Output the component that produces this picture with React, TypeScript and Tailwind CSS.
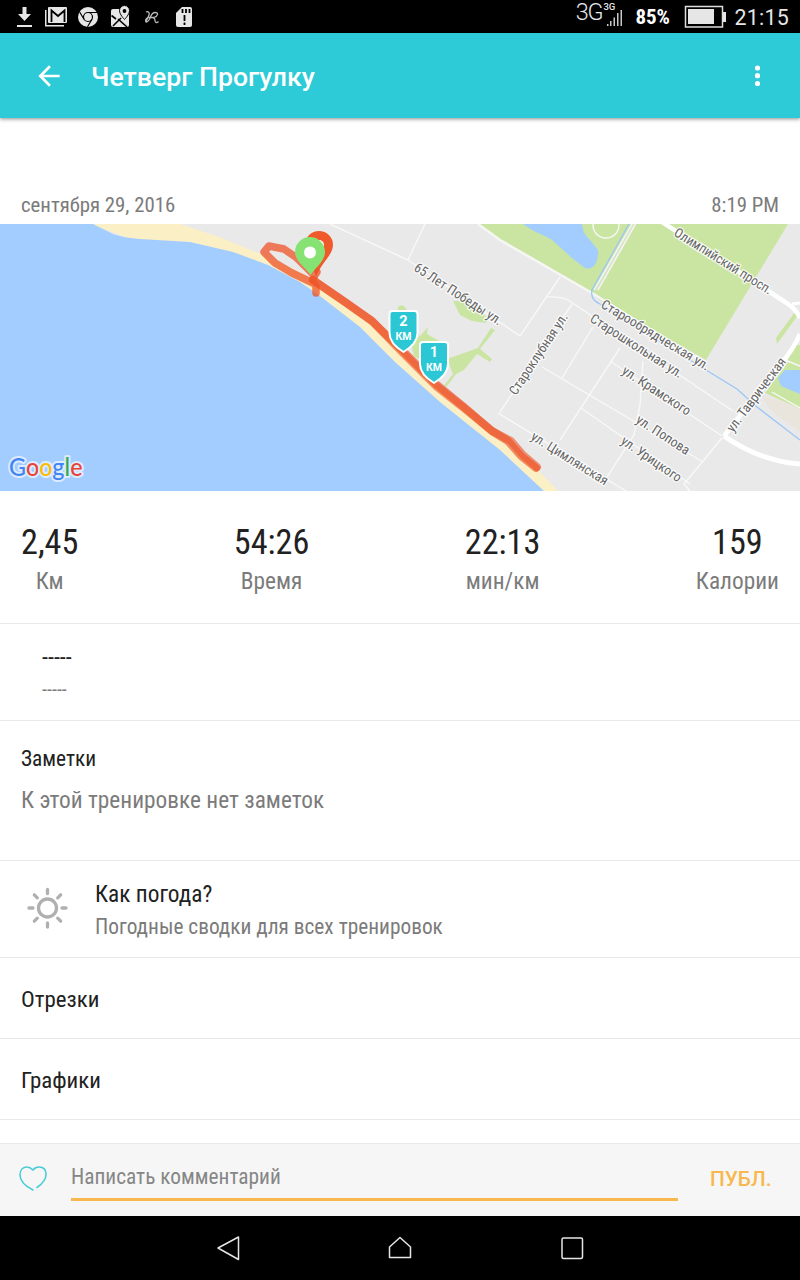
import type { ReactNode } from 'react';

const stats = [
  { value: '2,45', label: 'Км' },
  { value: '54:26', label: 'Время' },
  { value: '22:13', label: 'мин/км' },
  { value: '159', label: 'Калории' },
];

const streets = [
  { name: '65 Лет Победы ул.', x: 413, y: 270, angle: 33, length: 102 },
  { name: 'Староклубная ул.', x: 516, y: 396, angle: -56.500, length: 95 },
  { name: 'Олимпийский просп.', x: 673, y: 235, angle: 32, length: 113 },
  { name: 'Старообрядческая ул.', x: 600, y: 307, angle: 31, length: 124 },
  { name: 'Старошкольная ул.', x: 589, y: 321, angle: 32.500, length: 107 },
  { name: 'ул. Крамского', x: 621, y: 373, angle: 33, length: 79 },
  { name: 'ул. Попова', x: 635, y: 422, angle: 33, length: 61 },
  { name: 'ул. Урицкого', x: 620, y: 443, angle: 34.500, length: 70 },
  { name: 'ул. Цимлянская', x: 530, y: 439, angle: 32, length: 88 },
  { name: 'ул. Таврическая', x: 733, y: 433, angle: -53, length: 89 },
];

function StatusBar() {
  return (
    <div className="flex h-[33px] items-center justify-between bg-black pl-4 pr-[11px] text-[#e6e6e6] [font-stretch:100%]">
      <svg width="180" height="33" viewBox="16 0 180 33" fill="#e6e6e6">
        <path d="M22.500 7h4v7h4.500l-6.500 7-6.500-7h4.500zM17 25h15v2H17z" />
        <path d="M45 10h1.500v15H64v1.500H45z" />
        <path d="M49 7h17a1 1 0 0 1 1 1v14a1 1 0 0 1-1 1H49a1 1 0 0 1-1-1V8a1 1 0 0 1 1-1z" />
        <path d="M51.500 22V10.500l6.500 5.500 6.500-5.500v11.500" fill="none" stroke="#000" strokeWidth="1.800" />
        <circle cx="88" cy="17" r="10" />
        <g fill="none" stroke="#000" strokeWidth="1.200">
          <circle cx="88" cy="17" r="4.500" />
          <path d="M88 12.500h9M84 19.200l-4.500-7.500M92 19.200l-4.500 7.600" />
        </g>
        <path d="M113 9h14a2 2 0 0 1 2 2v14a2 2 0 0 1-2 2h-14a2 2 0 0 1-2-2V11a2 2 0 0 1 2-2z" />
        <path d="M111.500 15.500L116 19M118 19l9 8M113 26l8-8" fill="none" stroke="#000" strokeWidth="1.600" />
        <path d="M124.500 5.500a5 5 0 0 1 5 5c0 4-5 9-5 9s-5-5-5-9a5 5 0 0 1 5-5z" stroke="#000" />
        <circle cx="124.500" cy="11" r="1.900" fill="#000" />
        <path
          d="M146 12C148 11 150 12.500 149 15S147 20 146 21S147 23 149 20S151 12.500 155 12.500S158 16 154 17.500H150C153 17 155 18 155 20.500S157 23 158.500 21.500M150 17.500C147.500 17 145.500 19 145.500 21"
          fill="none"
          stroke="#bbb"
          strokeWidth="1.300"
        />
        <path d="M182 7h8a2 2 0 0 1 2 2v16a2 2 0 0 1-2 2h-12a2 2 0 0 1-2-2V13z" />
        <path d="M182.500 9v4M186 9v4M189.500 9v4M184.500 15v6M184.500 22.500v2.500" stroke="#000" strokeWidth="1.800" />
      </svg>
      <div className="flex items-center font-['Roboto']">
        <span className="pb-[8px] text-[23.500px] leading-none font-light tracking-[-1.2px]">3G</span>
        <div className="flex h-[25px] w-[21px] flex-col items-end">
          <span className="-mt-[2px] w-full pl-px text-[9.500px] leading-[10px] font-medium">3G</span>
          <svg className="-mt-[3px]" width="17" height="17" viewBox="0 0 17 17" fill="#c9c9c9">
            <path d="M1 15h1.500v2H1zM4 12h1.500v5H4zM7.500 8.500H9V17H7.500zM11 4h1.500v13H11zM14.500 1H16v16h-1.500z" />
          </svg>
        </div>
        <span className="ml-[12px] w-9 pt-[3px] text-[21px] font-bold text-white [font-stretch:75%]">85%</span>
        <svg className="ml-[13px]" width="43" height="24" viewBox="0 0 43 24">
          <rect x="1.500" y="1.500" width="37" height="20.500" fill="none" stroke="#ddd" strokeWidth="1.500" />
          <path d="M4 4h26v15H4zM39 7h3v10h-3z" fill="#e6e6e6" />
        </svg>
        <span className="ml-[7px] pt-[3px] text-[21.330px] tracking-[0.3px]">21:15</span>
      </div>
    </div>
  );
}

function AppBar() {
  return (
    <header className="relative flex h-[85px] items-center bg-[#2dcad7] pl-[33px] pr-8 text-white shadow-[0_1px_4px_rgba(0,0,0,0.45)] [font-stretch:100%]">
      <svg className="shrink-0" width="32" height="32" viewBox="0 0 24 24" fill="white">
        <path d="M20 11H7.830l5.590-5.590L12 4l-8 8 8 8 1.410-1.410L7.830 13H20v-2z" />
      </svg>
      <h1 className="ml-[26px] pt-0.5 font-['Roboto'] text-[26.670px] font-medium">Четверг Прогулку</h1>
      <svg className="-mr-[6px] ml-auto" width="32" height="32" viewBox="0 0 32 32" fill="white">
        <circle cx="15.500" cy="8" r="2.600" />
        <circle cx="15.500" cy="15.700" r="2.600" />
        <circle cx="15.500" cy="23.500" r="2.600" />
      </svg>
    </header>
  );
}

function KmMarker({ x, y, km }: { x: number; y: number; km: string }) {
  return (
    <g transform={`translate(${x} ${y})`}>
      <path
        d="M-11 -41H11a3 3 0 0 1 3 3V-19C14 -10 5 -3 0 0C-5 -3 -14 -10 -14 -19V-38a3 3 0 0 1 3-3z"
        fill="#2bc7d4"
        stroke="white"
        strokeWidth="2"
      />
      <g fill="white" textAnchor="middle" className="font-['Roboto'] font-bold [font-stretch:100%]">
        <text y="-26" fontSize="14.500">{km}</text>
        <text y="-12" fontSize="10.500">КМ</text>
      </g>
    </g>
  );
}

function RouteMap() {
  return (
    <svg className="block" width="800" height="267" viewBox="0 224 800 267">
      <rect y="224" width="800" height="267" fill="#e9e9e9" />

      {/* parks */}
      <g fill="#cae5a2">
        <path d="M478 224H788L706 360L600 300L592 294L500 240z" />
        <path d="M776 338L795 312L798 315L777 344z" />
        <path d="M795 345H800V409L765 393L785 366z" />
        <path d="M443 387L453 374L447 359L478 348L491 328L495 330L480 349L492 359L490 362L477 354L464 370L456 374L447 386z" />
        <path d="M398 307l4-2 4 3v6h-8zM410 340L420 336 428 327 427 334 444 344 440 372 414 356z" />
        <path d="M453 301h14l12 9 9 9-2 4-14-2-12-6z" />
      </g>
      <path d="M760 394L785 402L800 409V432L770 410z" fill="#e9e5dc" />

      {/* inland water */}
      <g fill="#a3ccff">
        <path d="M523 224L532 230C541 235 547 236 552 240L560 247L572 258L585 268C593 271 599 262 598 250L590 240C584 235 583 230 582 224z" />
        <path d="M778 378L785 370H800V394L781 386z" />
      </g>

      {/* minor streets */}
      <g fill="none" stroke="#f8f8f8" strokeWidth="1.400">
        <path d="M330 224L408 260L520 336L560 277M408 260L425 224" />
        <path d="M548 297Q565 296 574 304L733 411M572 304L500 412M542 367L703 462" />
        <path d="M593 327L562 378M620 348L560 440M581 408L690 484M610 361L722 436M643 361L640 405L634 435L607 477" />
        <path d="M498 413L626 491M722 438L684 484L690 491" />
        <circle cx="606" cy="225" r="13" />
        <path d="M785 360L800 366M772 392L800 408" />
      </g>

      {/* main roads */}
      <g fill="none" stroke="white">
        <path d="M478 224L500 240L592 293L706 364" strokeWidth="2.500" stroke="#f6f6f6" />
        <path d="M634 224L596 290" stroke="#d9e5c6" strokeWidth="5" />
        <path d="M635.500 224L598 290M632 224L594 290" stroke="#f6f6f6" strokeWidth="1.300" />
        <path d="M662 222L782 300Q796 308 800 318" strokeWidth="4.500" />
        <path d="M800 334Q794 348 784 360L724 436" strokeWidth="4.500" />
        <path d="M724 436Q760 461 800 464" strokeWidth="5" />
        <path d="M792 304L800 303" strokeWidth="3" />
      </g>

      {/* canal */}
      <path
        d="M629 224L592 290Q590 300 600 304L706 370L737 389L757 407L800 440"
        fill="none"
        stroke="#9cc6f7"
        strokeWidth="1.300"
      />

      {/* beach and sea */}
      <path d="M90 224H180L222 238L270 258L300 272L345 303L375 323L400 350L440 388L480 423L530 462L558 491H540L300 300z" fill="#fbefc6" />
      <path
        d="M0 224H93Q103 229 113 234Q124 238 140 239L190 242L233 252L268 265L300 282L320 296L360 327L395 362L440 402L500 450L544 491H0z"
        fill="#a3ccff"
      />

      {/* finish pin, route, start pin */}
      <path d="M319 231a14 14 0 0 1 14 14c0 10-12 18-17 32c-3-12-11-22-11-32a14 14 0 0 1 14-14z" fill="#f05a2b" />
      <circle cx="319" cy="245" r="5" fill="white" />
      <g fill="none" stroke="#ee5327" strokeLinecap="round" strokeLinejoin="round">
        <path
          d="M313 283L292 273L275 263L264 252L269 246L284 249L297 258L313 274L317 272L312 280L316 286V293"
          strokeWidth="7.500"
          strokeOpacity="0.75"
        />
        <path d="M313 280L345 302L372 321L403 351L436 384L464 407L492 431L508 441L521 456L536 468" strokeWidth="8" strokeOpacity="0.65" />
        <path d="M313 280L345 302L372 321L403 353L436 386L464 408L492 431L511 441L523 455L537 467" strokeWidth="8" strokeOpacity="0.6" />
      </g>
      <path d="M310 237a15 15 0 0 1 15 15c0 9-9 15-14.500 23c-5.500-8-15.500-14-15.500-23a15 15 0 0 1 15-15z" fill="#86e373" />
      <circle cx="310" cy="252.500" r="6" fill="white" />

      <g
        fill="#666"
        stroke="white"
        strokeWidth="2.500"
        strokeOpacity="0.8"
        paintOrder="stroke"
        fontSize="13.500"
        className="font-['Roboto']"
      >
        {streets.map((street) => (
          <text
            key={street.name}
            transform={`translate(${street.x} ${street.y}) rotate(${street.angle})`}
            textLength={street.length}
            lengthAdjust="spacingAndGlyphs"
          >
            {street.name}
          </text>
        ))}
      </g>

      <KmMarker x={403.500} y={352} km="2" />
      <KmMarker x={434} y={383} km="1" />

      <text
        x="9"
        y="475.500"
        fontSize="24"
        textLength="73.500"
        lengthAdjust="spacingAndGlyphs"
        stroke="#dcebff"
        strokeWidth="4"
        strokeLinejoin="round"
        paintOrder="stroke"
        className="font-['Lato'] font-medium"
      >
        <tspan fill="#4285f4">G</tspan>
        <tspan fill="#ea4335">o</tspan>
        <tspan fill="#fbbc05">o</tspan>
        <tspan fill="#4285f4">g</tspan>
        <tspan fill="#34a853">l</tspan>
        <tspan fill="#ea4335">e</tspan>
      </text>
    </svg>
  );
}

function Section({ className, children }: { className: string; children: ReactNode }) {
  return <section className={`border-b border-[#e8e8e8] px-[21px] ${className}`}>{children}</section>;
}

function CommentBar() {
  return (
    <div className="flex h-[73px] border-t border-[#e8e8e8] bg-[#f6f6f6] pl-[19px]">
      <svg className="mt-[22px]" width="28" height="26" viewBox="0 0 28 26" fill="none" stroke="#4accd6" strokeWidth="1.600" strokeLinecap="round">
        <path d="M14 24C7 20.500 1 15 1 9C1 4 4 1 8 1C11 1 12.500 2.500 14 4C15.500 2 17.500 1 20 1C24.500 1 27 4 27 8.500C27 13 23 18 18 21.500" />
      </svg>
      <div className="ml-6 flex h-[57px] w-[607px] items-center border-b-[3px] border-[#f8b84e] pt-[12px] text-[21.330px] text-[#868686]">
        Написать комментарий
      </div>
      <button className="ml-8 font-['Roboto'] text-[20.800px] font-medium text-[#f8b84e] [font-stretch:100%]">ПУБЛ.</button>
    </div>
  );
}

function NavBar() {
  return (
    <nav className="flex h-16 items-center justify-center gap-[140px] bg-black">
      <svg width="32" height="32" viewBox="0 0 32 32" fill="none" stroke="#e6e6e6" strokeWidth="1.500" strokeLinejoin="round">
        <path d="M26.500 5v22.500L6 16z" />
      </svg>
      <svg width="32" height="32" viewBox="0 0 32 32" fill="none" stroke="#e6e6e6" strokeWidth="1.500" strokeLinejoin="round">
        <path d="M16 5.500L26.500 15V25.500H5.500V15z" />
      </svg>
      <svg width="32" height="32" viewBox="0 0 32 32" fill="none" stroke="#e6e6e6" strokeWidth="1.500">
        <rect x="6" y="6" width="20.500" height="20.500" rx="1.500" />
      </svg>
    </nav>
  );
}

export default function App() {
  return (
    <div className="flex h-[1280px] w-[800px] flex-col bg-white font-['Roboto_Condensed','Roboto',sans-serif] text-[#212121] [font-stretch:75%]">
      <StatusBar />
      <AppBar />
      <div className="flex h-[106px] items-end justify-between px-[21px] pb-[3px] text-[20.800px] text-[#7b7b7b]">
        <span>сентября 29, 2016</span>
        <span>8:19 PM</span>
      </div>
      <RouteMap />

      <Section className="flex h-[133px] justify-between pt-[31px]">
        {stats.map((stat) => (
          <div key={stat.label} className="flex flex-col items-center">
            <span className="text-[34.200px] leading-10">{stat.value}</span>
            <span className="mt-[3px] text-[23.330px] leading-8 text-[#7b7b7b]">{stat.label}</span>
          </div>
        ))}
      </Section>

      <Section className="h-[97px] pt-[19px]">
        <div className="pl-[21px]">
          <p className="text-[24px] leading-7">-----</p>
          <p className="mt-[6px] text-[20px] leading-6 text-[#7b7b7b]">-----</p>
        </div>
      </Section>

      <Section className="h-[140px] pt-6">
        <h2 className="text-[21.330px] leading-7">Заметки</h2>
        <p className="mt-[11px] text-[23.330px] leading-8 text-[#7b7b7b]">К этой тренировке нет заметок</p>
      </Section>

      <Section className="flex h-[97px] pt-[17px]">
        <svg className="mt-2 ml-[5px]" width="43" height="44" viewBox="0 0 43 44" fill="none" stroke="#b0b0b0" strokeWidth="3.300">
          <circle cx="21.500" cy="22" r="9" />
          <path
            d="M21.500 3.500v4M21.500 37v4M3 22h4M36 22h4M8.300 8.800l3 3M31.700 32.200l3 3M8.300 35.200l3-3M31.700 11.800l3-3"
            strokeLinecap="round"
          />
        </svg>
        <div className="ml-[26px]">
          <h2 className="text-[23.330px] leading-8">Как погода?</h2>
          <p className="mt-[3px] text-[21.330px] leading-7 text-[#7b7b7b]">Погодные сводки для всех тренировок</p>
        </div>
      </Section>

      <Section className="flex h-[81px] items-center pt-[4px] text-[22.900px]">Отрезки</Section>
      <Section className="flex h-[81px] items-center pt-[4px] text-[22.900px]">Графики</Section>
      <div className="flex-1" />

      <CommentBar />
      <NavBar />
    </div>
  );
}
